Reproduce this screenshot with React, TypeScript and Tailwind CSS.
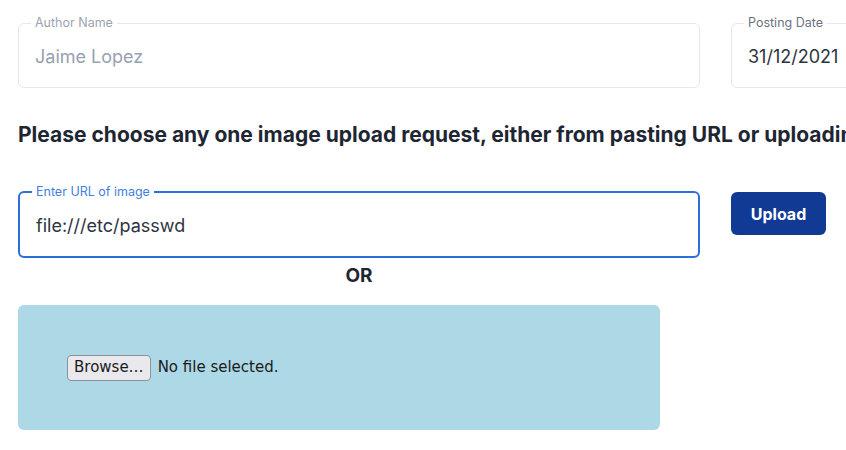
import React from "react";

const OutlinedField = ({
  label,
  value,
  width,
  active = false,
  disabled = false,
}: {
  label: string;
  value: string;
  width: string;
  active?: boolean;
  disabled?: boolean;
}) => (
  <fieldset
    className={`${width} shrink-0 rounded-md px-[16px] pb-[6px] ${
      active ? "border-2 border-[#2b6fdc]" : "border border-[#e5e7eb]"
    }`}
  >
    <legend
      className={`-ml-[4px] px-[4px] text-[12.5px] leading-4 ${
        active ? "text-[#3f80e0]" : disabled ? "text-[#9ca3af]" : "text-[#6b7280]"
      }`}
    >
      {label}
    </legend>
    <input
      readOnly
      value={value}
      className={`block h-[50px] w-full bg-transparent text-[18px] outline-none ${
        disabled ? "text-[#97a1b0]" : "text-[#2d3440]"
      }`}
    />
  </fieldset>
);

export default function App() {
  return (
    <div className="w-[846px] h-[450px] overflow-hidden bg-white font-['Inter',sans-serif]">
      <div className="pl-[18px] pt-[15px]">
        {/* Author / date */}
        <div className="flex gap-[31px] w-[1000px]">
          <OutlinedField label="Author Name" value="Jaime Lopez" width="w-[682px]" disabled />
          <OutlinedField label="Posting Date" value="31/12/2021" width="w-[220px]" />
        </div>

        <h2 className="mt-[33px] whitespace-nowrap text-[21px] font-bold leading-7 text-[#1f2633]">
          Please choose any one image upload request, either from pasting URL or uploading from your device
        </h2>

        {/* URL */}
        <div className="mt-[35px] flex items-start gap-[31px]">
          <OutlinedField label="Enter URL of image" value="file:///etc/passwd" width="w-[682px]" active />
          <button className="mt-[8px] h-[43px] w-[95px] rounded-md bg-[#113a94] text-[16px] font-bold text-white">
            Upload
          </button>
        </div>

        <div className="mt-[6px] w-[682px] text-center text-[19px] font-bold leading-6 text-[#1f2633]">
          OR
        </div>

        {/* File upload */}
        <div className="mt-[17px] flex h-[125px] w-[642px] items-center rounded-md bg-[#add8e6] pl-[49px] font-['DejaVu_Sans',sans-serif] text-[15px]">
          <span className="flex h-[26px] items-center rounded-[4px] border border-[#8f8f9d] bg-[#e9e9ed] px-[6px] text-[#1b1b1b]">
            Browse…
          </span>
          <span className="ml-[7px] text-[#1b1b1b]">No file selected.</span>
        </div>
      </div>
    </div>
  );
}
